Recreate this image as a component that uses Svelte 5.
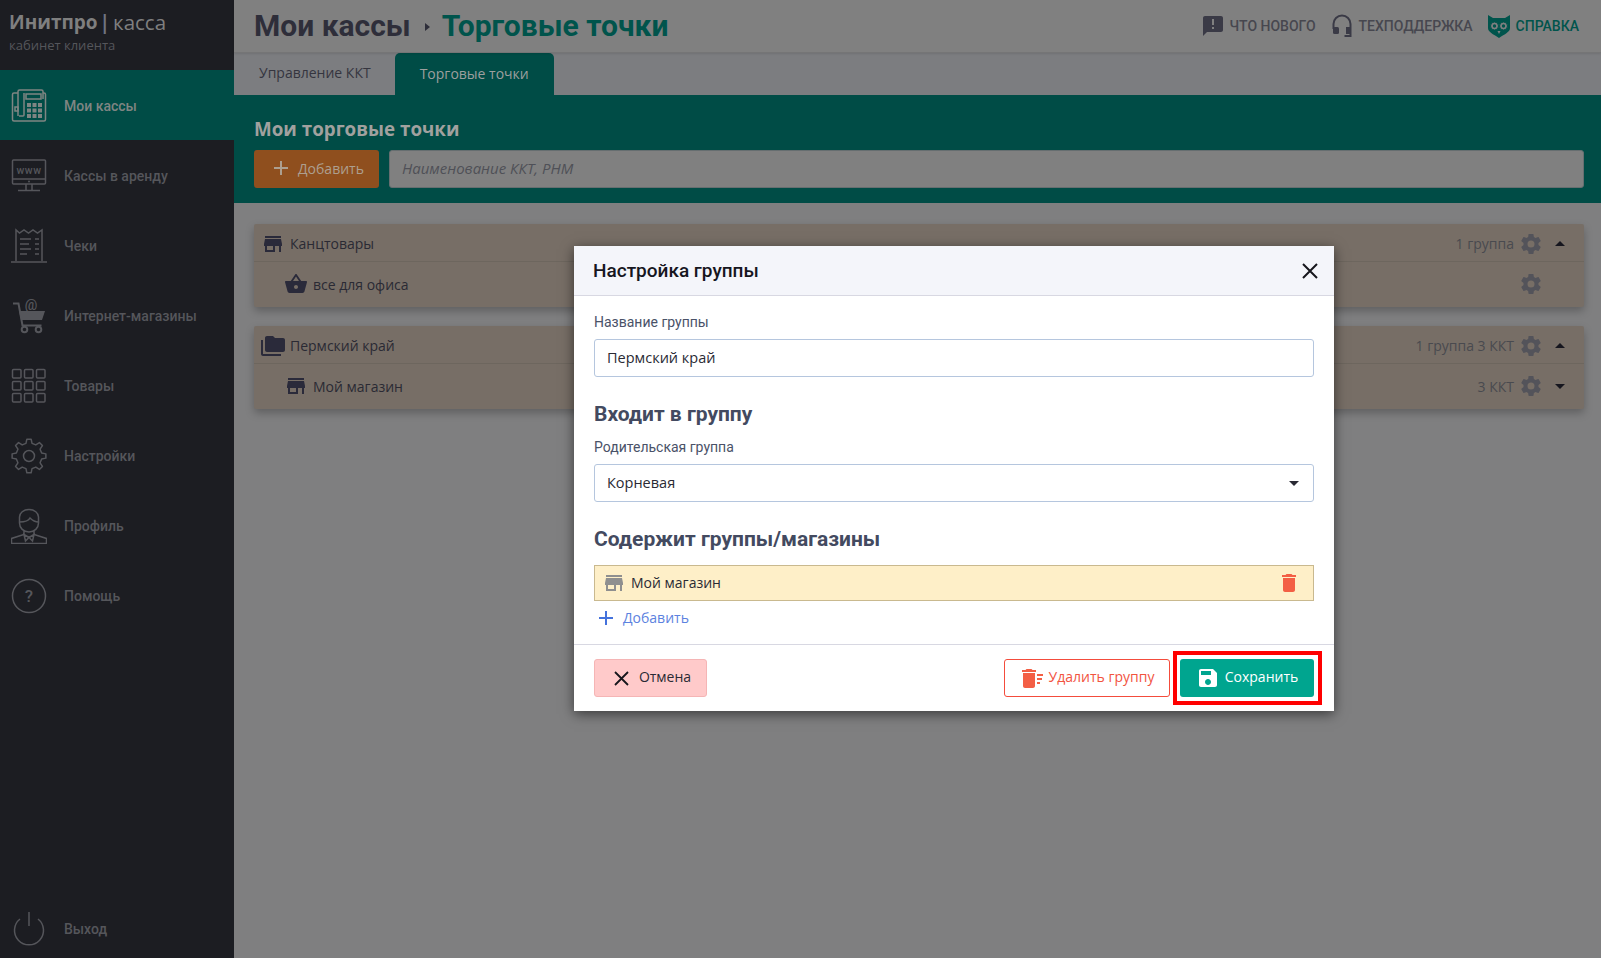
<script lang="ts">
  const icons = {
    store: "M20 4H4v2h16V4zm1 10v-2l-1-5H4l-1 5v2h1v6h10v-6h4v6h2v-6h1zm-9 4H6v-4h6v4z",
    basket: "M17.21 9l-4.38-6.56c-.19-.28-.51-.42-.83-.42-.32 0-.64.14-.83.43L6.79 9H2c-.55 0-1 .45-1 1 0 .09.01.18.04.27l2.54 9.27c.23.84 1 1.46 1.92 1.46h13c.92 0 1.69-.62 1.93-1.46l2.54-9.27L23 10c0-.55-.45-1-1-1h-4.79zM9 9l3-4.4L15 9H9zm3 8c-1.1 0-2-.9-2-2s.9-2 2-2 2 .9 2 2-.9 2-2 2z",
    folders: "M2 6H0v14c0 1.1.9 2 2 2h18v-2H2V6zm20-2h-8l-2-2H6c-1.1 0-2 .9-2 2v12c0 1.1.9 2 2 2h16c1.1 0 2-.9 2-2V6c0-1.1-.9-2-2-2z",
    gear: "M12,15.5A3.5,3.5 0 0,1 8.5,12A3.5,3.5 0 0,1 12,8.5A3.5,3.5 0 0,1 15.5,12A3.5,3.5 0 0,1 12,15.5M19.43,12.97C19.47,12.65 19.5,12.33 19.5,12C19.5,11.67 19.47,11.34 19.43,11L21.54,9.37C21.73,9.22 21.78,8.95 21.66,8.73L19.66,5.27C19.54,5.05 19.27,4.96 19.05,5.05L16.56,6.05C16.04,5.66 15.5,5.32 14.87,5.07L14.5,2.42C14.46,2.18 14.25,2 14,2H10C9.75,2 9.54,2.18 9.5,2.42L9.13,5.07C8.5,5.32 7.96,5.66 7.44,6.05L4.95,5.05C4.73,4.96 4.46,5.05 4.34,5.27L2.34,8.73C2.21,8.95 2.27,9.22 2.46,9.37L4.57,11C4.53,11.34 4.5,11.67 4.5,12C4.5,12.33 4.53,12.65 4.57,12.97L2.46,14.63C2.27,14.78 2.21,15.05 2.34,15.27L4.34,18.73C4.46,18.95 4.73,19.03 4.95,18.95L7.44,17.94C7.96,18.34 8.5,18.68 9.13,18.93L9.5,21.58C9.54,21.82 9.75,22 10,22H14C14.25,22 14.46,21.82 14.5,21.58L14.87,18.93C15.5,18.67 16.04,18.34 16.56,17.94L19.05,18.95C19.27,19.03 19.54,18.95 19.66,18.73L21.66,15.27C21.78,15.05 21.73,14.78 21.54,14.63L19.43,12.97Z",
    save: "M17 3H5c-1.11 0-2 .9-2 2v14c0 1.1.89 2 2 2h14c1.1 0 2-.9 2-2V7l-4-4zm-5 16c-1.66 0-3-1.34-3-3s1.34-3 3-3 3 1.34 3 3-1.34 3-3 3zm3-10H5V5h10v4z",
    trash: "M6 19c0 1.1.9 2 2 2h8c1.1 0 2-.9 2-2V7H6v12zM19 4h-3.5l-1-1h-5l-1 1H5v2h14V4z",
    trashSweep: "M3 20c0 1.1.9 2 2 2h8c1.1 0 2-.9 2-2V7H3v13zM16 4h-3.500l-1-1h-5l-1 1H2v2h14V4zM17 8h6v2h-6zM17 12h5v2h-5zM17 16h3v2h-3z",
    news: "M20 2H4c-1.1 0-1.99.9-1.99 2L2 22l4-4h14c1.1 0 2-.9 2-2V4c0-1.1-.9-2-2-2zm-7 9h-2V5h2v6zm0 4h-2v-2h2v2z"
  };

  const nav = [
    { key: "phone", label: "Мои кассы", active: true },
    { key: "www", label: "Кассы в аренду" },
    { key: "receipt", label: "Чеки" },
    { key: "cart", label: "Интернет-магазины" },
    { key: "grid", label: "Товары" },
    { key: "cog", label: "Настройки" },
    { key: "user", label: "Профиль" },
    { key: "help", label: "Помощь" }
  ];

  const groups = [
    {
      title: "Канцтовары", icon: "store", info: "1 группа", caret: "up",
      child: { title: "все для офиса", icon: "basket", info: "", caret: "" }
    },
    {
      title: "Пермский край", icon: "folders", info: "1 группа 3 ККТ", caret: "up",
      child: { title: "Мой магазин", icon: "store", info: "3 ККТ", caret: "down" }
    }
  ];

  const grid = [0, 12, 24];
  let groupName = $state("Пермский край");

  // outline of the 8-tooth sidebar gear
  function gearPath(cx: number, cy: number, inner: number, outer: number, teeth: number) {
    const pts: string[] = [];
    const step = (Math.PI * 2) / teeth;
    for (let i = 0; i < teeth; i++) {
      const a = i * step - Math.PI / 2;
      const seq: [number, number][] = [
        [inner, a - step * 0.3],
        [outer, a - step * 0.16],
        [outer, a + step * 0.16],
        [inner, a + step * 0.3]
      ];
      for (const [r, t] of seq) {
        pts.push(`${(cx + r * Math.cos(t)).toFixed(2)} ${(cy + r * Math.sin(t)).toFixed(2)}`);
      }
    }
    return "M" + pts.join("L") + "Z";
  }
</script>

{#snippet mi(name, size, cls = "")}
  <svg class={cls} width={size} height={size} viewBox="0 0 24 24" fill="currentColor"><path d={icons[name]} /></svg>
{/snippet}

{#snippet navIcon(key)}
  <svg class="nav-icon" width="36" height="36" viewBox="0 0 36 36" fill="none" stroke="currentColor" stroke-width="1.500">
    {#if key === "phone"}
      <path d="M7 5H3a1.500 1.500 0 0 0-1.500 1.500v25A1.500 1.500 0 0 0 3 33h30a1.500 1.500 0 0 0 1.500-1.500v-25A1.500 1.500 0 0 0 33 5h-1" />
      <path d="M7 28V3.500A1.500 1.500 0 0 1 8.500 2h22A1.500 1.500 0 0 1 32 3.500V11" />
      <path d="M13 5v22a1 1 0 0 1-1 1H8" />
      <rect x="15" y="6" width="15" height="5" />
      <rect x="4" y="19" width="3" height="4" />
      {#each [0, 5.500, 11] as dx}{#each [0, 5.500, 11] as dy}
        <rect x={16 + dx} y={15 + dy} width="4" height="4" fill="currentColor" stroke="none" />
      {/each}{/each}
    {:else if key === "www"}
      <rect x="1.500" y="2" width="33" height="24" rx="1" />
      <path d="M1.500 21h33M15 26v6M21 26v6M7 32.500h22" />
      <circle cx="18" cy="23.500" r="1" fill="currentColor" stroke="none" />
      <text x="18" y="16" text-anchor="middle" font-size="10.500" letter-spacing=".6" fill="currentColor" stroke="none" font-family="Roboto, sans-serif">www</text>
    {:else if key === "receipt"}
      <path d="M5 33V2l3.500 3 4.500-3 4.500 3 4.500-3 4.500 3 4.500-3v31M0 34h37" />
      <path d="M9 11h11M24 11h4M9 16h9M24 16h4M9 21h11M24 21h4M9 26h7M24 26h4" stroke-width="1.600" />
    {:else if key === "cart"}
      <path d="M2 5.500h5.500l4 22h19" stroke-width="2" />
      <path d="M8 13h26l-3 9H10z" fill="currentColor" stroke="none" />
      <circle cx="13.500" cy="31.500" r="2.800" stroke-width="2" />
      <circle cx="27.500" cy="31.500" r="2.800" stroke-width="2" />
      <text x="20" y="12" text-anchor="middle" font-size="14" fill="currentColor" stroke="none" font-family="Roboto, sans-serif">@</text>
    {:else if key === "grid"}
      {#each grid as y}{#each grid as x}
        <rect x={x + 1.500} y={y + 1.500} width="8.500" height="8.500" rx="1" />
      {/each}{/each}
    {:else if key === "cog"}
      <circle cx="18" cy="18" r="5.500" />
      <path d={gearPath(18, 18, 13, 17, 8)} stroke-linejoin="round" />
    {:else if key === "user"}
      <path d="M8.500 15V9c0-4 4-7.500 9.500-7.500S27.500 5 27.500 9v6c0 5-4 9-9.500 9s-9.500-4-9.500-9z" />
      <path d="M8.500 14c5 0 9-1 10.500-4 2 2 4.500 4 8.500 4" />
      <path d="M13 23v3.500L0.500 30.500v5h35v-5L23 26.500V23M13 26.500l5 3-3.500 3.500zM23 26.500l-5 3 3.500 3.500z" />
    {:else if key === "help"}
      <circle cx="18" cy="18" r="16.500" />
      <text x="18" y="24" text-anchor="middle" font-size="17" fill="currentColor" stroke="none" font-family="Roboto, sans-serif">?</text>
    {:else}
      <path d="M18 1v14" />
      <path d="M9 8a14.500 14.500 0 1 0 18 0" />
    {/if}
  </svg>
{/snippet}

<div class="app">
  <aside class="sidebar">
    <div class="logo">
      <div class="logo-name"><b>Инитпро</b> <b class="pipe">|</b> <span>касса</span></div>
      <div class="logo-sub">кабинет клиента</div>
    </div>
    <nav>
      {#each nav as item}
        <a class="nav-item" class:active={item.active} href="#top">
          {@render navIcon(item.key)}
          <span>{item.label}</span>
        </a>
      {/each}
    </nav>
    <a class="nav-item logout" href="#top">
      {@render navIcon("power")}
      <span>Выход</span>
    </a>
  </aside>

  <main class="main">
    <header class="topbar">
      <h1>Мои кассы <i class="crumb"></i> <em>Торговые точки</em></h1>
      <div class="links">
        <a href="#top">{@render mi("news", 24)}ЧТО НОВОГО</a>
        <a href="#top">
          <svg width="24" height="24" viewBox="0 0 24 24" fill="none" stroke="currentColor" stroke-width="2">
            <path d="M3.500 15v-5a8.500 8.500 0 0 1 17 0v12h-6" />
            <rect x="3" y="13" width="6" height="7" rx="1.500" fill="currentColor" stroke="none" />
            <rect x="16" y="13" width="5" height="7" fill="currentColor" stroke="none" />
          </svg>
          ТЕХПОДДЕРЖКА
        </a>
        <a class="help" href="#top">
          <svg width="24" height="24" viewBox="0 0 24 24">
            <path fill="currentColor" d="M1 1l5 3h12l5-3v13c0 4-5 6-11 10C6 20 1 18 1 14z" />
            <circle cx="7.500" cy="12" r="4" fill="#7f7f80" stroke="currentColor" stroke-width="1" />
            <circle cx="16.500" cy="12" r="4" fill="#7f7f80" stroke="currentColor" stroke-width="1" />
            <circle cx="7.500" cy="12" r="1.700" fill="currentColor" />
            <circle cx="16.500" cy="12" r="1.700" fill="currentColor" />
            <path fill="#7f7f80" d="M10.500 17h3L12 20z" />
          </svg>
          СПРАВКА
        </a>
      </div>
    </header>

    <div class="tabs">
      <a class="tab" href="#top">Управление ККТ</a>
      <a class="tab current" href="#top">Торговые точки</a>
    </div>

    <section class="band">
      <h2>Мои торговые точки</h2>
      <div class="band-row">
        <button class="add-btn" type="button"><i class="plus"></i>Добавить</button>
        <input class="search" placeholder="Наименование ККТ, РНМ" />
      </div>
    </section>

    <section class="groups">
      {#each groups as g}
        <div class="card">
          <div class="row">
            <span class="row-icon">{@render mi(g.icon, 24)}</span>
            <span class="row-title">{g.title}</span>
            <span class="row-info">{g.info}</span>
            {@render mi("gear", 24, "gear")}
            <i class="caret {g.caret}"></i>
          </div>
          <div class="row child">
            <span class="row-icon">{@render mi(g.child.icon, 24)}</span>
            <span class="row-title">{g.child.title}</span>
            <span class="row-info">{g.child.info}</span>
            {@render mi("gear", 24, "gear")}
            <i class="caret {g.child.caret}"></i>
          </div>
        </div>
      {/each}
    </section>
  </main>

  <div class="modal">
    <div class="modal-head">
      <h3>Настройка группы</h3>
      <svg width="16" height="16" viewBox="0 0 16 16" stroke="#16161c" stroke-width="2"><path d="M1 1l14 14M15 1L1 15" /></svg>
    </div>
    <div class="modal-body">
      <label class="label" for="group-name">Название группы</label>
      <input id="group-name" class="control" bind:value={groupName} />

      <h4>Входит в группу</h4>
      <label class="label" for="group-parent">Родительская группа</label>
      <div id="group-parent" class="control select"><span>Корневая</span><i class="caret down"></i></div>

      <h4 class="second">Содержит группы/магазины</h4>
      <div class="list-item">
        <span class="list-icon">{@render mi("store", 24)}</span>
        <span class="lift">Мой магазин</span>
        <span class="list-del">{@render mi("trash", 24)}</span>
      </div>
      <a class="list-add" href="#top"><i class="plus"></i><span class="lift">Добавить</span></a>
    </div>
    <div class="modal-foot">
      <button class="btn cancel" type="button">
        <svg width="15" height="15" viewBox="0 0 15 15" stroke="#16161c" stroke-width="1.800"><path d="M1 1l13 13M14 1L1 14" /></svg>
        <span class="lift">Отмена</span>
      </button>
      <button class="btn remove" type="button">{@render mi("trashSweep", 24)}<span class="lift">Удалить группу</span></button>
      <div class="save-mark">
        <button class="btn save" type="button">{@render mi("save", 24)}<span class="lift">Сохранить</span></button>
      </div>
    </div>
  </div>
</div>

<style>
  :global(body) {
    margin: 0;
    background: #7f7f80;
    font-family: "Open Sans", sans-serif;
  }
  .app {
    position: relative;
    display: flex;
    width: 1601px;
    height: 958px;
    overflow: hidden;
  }
  a { text-decoration: none; color: inherit; }
  svg { display: block; flex: none; }
  .lift { display: block; padding-bottom: 2px; }

  .sidebar {
    width: 234px;
    flex: none;
    display: flex;
    flex-direction: column;
    background: #1c1d22;
    color: #55565b;
    font-family: Roboto, sans-serif;
  }
  .logo { height: 70px; box-sizing: border-box; padding: 9px 0 0 9px; font-family: "Open Sans", sans-serif; }
  .logo-name { display: flex; gap: 2px; font-size: 20.500px; line-height: 27px; color: #7f7f7f; }
  .logo-name b { font-weight: 700; font-size: 19px; }
  .logo-name .pipe { color: #6f7480; font-weight: 700; margin-right: 1px; }
  .logo-sub { font-size: 13px; line-height: 18px; color: #55565b; }
  .nav-item {
    height: 70px;
    box-sizing: border-box;
    padding-top: 2px;
    display: flex;
    align-items: center;
    gap: 17px;
    padding-left: 11px;
    font-size: 14px;
    font-weight: 500;
  }
  .nav-item.active { background: #004c46; color: #7f8583; }
  .logout { margin-top: auto; height: 60px; }

  .main { flex: 1; min-width: 0; display: flex; flex-direction: column; }
  .topbar {
    height: 53px;
    box-sizing: border-box;
    flex: none;
    display: flex;
    align-items: center;
    justify-content: space-between;
    padding: 0 22px 0 20px;
    border-bottom: 1px solid #757576;
    background: #808080;
    box-shadow: 0 1px 2px rgba(0, 0, 0, .1);
    position: relative;
  }
  h1 {
    margin: 0;
    display: flex;
    align-items: center;
    font: 700 30px/36px Roboto, sans-serif;
    color: #2e2e3a;
    white-space: nowrap;
  }
  h1 em { font-style: normal; color: #00544c; }
  .crumb {
    width: 0;
    height: 0;
    margin: 2px 12px 0 14px;
    border-left: 5px solid #2e2e3a;
    border-top: 4px solid transparent;
    border-bottom: 4px solid transparent;
  }
  .links { display: flex; align-items: center; gap: 14px; font: 500 14px/24px Roboto, sans-serif; color: #47474f; }
  .links a { display: flex; align-items: center; gap: 5px; }
  .links svg { color: #3a3a46; }
  .links .help, .links .help svg { color: #00544c; }

  .tabs { height: 42px; flex: none; display: flex; align-items: flex-end; background: #7c7d80; }
  .tab {
    height: 42px;
    box-sizing: border-box;
    padding: 0 25px 3px;
    display: flex;
    align-items: center;
    font-size: 14px;
    color: #35353f;
  }
  .tab.current {
    margin-left: -1px;
    background: #004c46;
    border-radius: 5px 5px 0 0;
    color: #9c9f9e;
    padding: 0 25px 1px;
  }

  .band { height: 108px; flex: none; box-sizing: border-box; background: #004c46; padding: 21px 17px 0 20px; }
  h2 { margin: 0 0 7px; font: 700 18.800px/27px "Open Sans", sans-serif; color: #a1a19f; }
  .band-row { display: flex; gap: 10px; }
  .add-btn {
    width: 125px;
    height: 38px;
    flex: none;
    display: flex;
    align-items: center;
    justify-content: center;
    gap: 10px;
    padding: 0 0 2px 5px;
    border: 0;
    border-radius: 3px;
    background: #8f4f1e;
    color: #ad9f8f;
    font: 14px "Open Sans", sans-serif;
  }
  .plus { position: relative; width: 14px; height: 14px; flex: none; }
  .plus::before, .plus::after { content: ""; position: absolute; background: currentColor; }
  .plus::before { left: 0; right: 0; top: 6px; height: 2px; }
  .plus::after { top: 0; bottom: 0; left: 6px; width: 2px; }
  .search {
    flex: 1;
    height: 38px;
    box-sizing: border-box;
    padding: 0 12px 2px;
    border: 1px solid #666e70;
    border-radius: 3px;
    background: #808080;
    font: italic 15px "Open Sans", sans-serif;
  }
  .search::placeholder { color: #4f5057; opacity: 1; }

  .groups { padding: 21px 17px 0 20px; display: flex; flex-direction: column; gap: 19px; }
  .card { background: #776e66; box-shadow: 0 4px 8px rgba(0, 0, 0, .25); border-radius: 2px; }
  .row {
    height: 38px;
    box-sizing: border-box;
    display: flex;
    align-items: center;
    padding: 2px 19px 0 0;
    font-size: 14px;
    color: #2a2a34;
    border-bottom: 1px solid #6d665e;
  }
  .row.child { height: 45px; padding: 0 19px 1px 0; border-bottom: 0; }
  .row-icon { width: 31px; margin-right: 5px; display: flex; justify-content: flex-end; color: #2a2a3a; }
  .row.child .row-icon { width: 54px; margin-right: 5px; }
  .row-title { flex: 1; }
  .row-info { color: #494a4f; margin-right: 5px; }
  .row :global(.gear) { color: #53535a; margin-right: 12px; }
  .caret { width: 0; height: 0; border-left: 5px solid transparent; border-right: 5px solid transparent; flex: none; }
  .caret.up { border-bottom: 5px solid #16161e; }
  .caret.down { border-top: 5px solid #16161e; }
  .row .caret { width: 10px; box-sizing: border-box; }

  .modal {
    position: absolute;
    left: 574px;
    top: 246px;
    width: 760px;
    height: 465px;
    display: flex;
    flex-direction: column;
    background: #fff;
    box-shadow: 0 3px 12px rgba(0, 0, 0, .55);
  }
  .modal-head {
    height: 50px;
    box-sizing: border-box;
    flex: none;
    display: flex;
    align-items: center;
    justify-content: space-between;
    padding: 0 16px 0 19px;
    background: #f4f5fa;
    border-bottom: 1px solid #d8d8e2;
  }
  h3 { margin: 0; font: 500 19px/24px Roboto, sans-serif; color: #16161e; }
  .modal-body { flex: 1; padding: 17px 20px 0; }
  .label { display: block; font: 14px/19px Roboto, sans-serif; color: #4a5268; margin-bottom: 7px; }
  .control {
    display: flex;
    align-items: center;
    justify-content: space-between;
    width: 100%;
    height: 38px;
    box-sizing: border-box;
    padding: 0 12px 2px;
    border: 1px solid #b5c6de;
    border-radius: 3px;
    font: 14.500px "Open Sans", sans-serif;
    color: #2a2a34;
    background: #fff;
    outline: none;
  }
  .select { padding-right: 14px; padding-bottom: 0; }
  .select span { padding-bottom: 2px; }
  .select .caret.down { border-top-color: #2a2a34; }
  h4 { margin: 24px 0 10px; font: 700 21px/27px Roboto, sans-serif; color: #434a60; }
  .second { margin: 24px 0 12px; }
  .list-item {
    height: 36px;
    box-sizing: border-box;
    display: flex;
    align-items: center;
    padding-left: 7px;
    background: #feefc8;
    border: 1px solid #c9b98f;
    font-size: 14px;
    color: #2a2a34;
  }
  .list-icon { color: #8f8f8f; margin-right: 5px; }
  .list-del { margin-left: auto; margin-right: 12px; color: #f35f45; }
  .list-add {
    display: flex;
    align-items: center;
    gap: 10px;
    height: 34px;
    padding-left: 5px;
    font-size: 14px;
    color: #5c82e0;
  }
  .list-add .plus { color: #4472dc; }
  .modal-foot {
    height: 67px;
    flex: none;
    display: flex;
    align-items: center;
    box-sizing: border-box;
    padding: 0 20px;
    border-top: 1px solid #d8d8e2;
  }
  .btn {
    height: 38px;
    box-sizing: border-box;
    display: flex;
    align-items: center;
    justify-content: center;
    border-radius: 3px;
    font: 14px "Open Sans", sans-serif;
    border: 1px solid transparent;
    padding: 0;
  }
  .btn .lift { padding-bottom: 4px; }
  .cancel { width: 113px; gap: 10px; padding-left: 4px; background: #ffcaca; border-color: #f5b5b5; color: #2a2a34; }
  .remove { width: 166px; margin-left: auto; gap: 5px; background: #fff; border-color: #f44c3c; color: #f2543f; }
  .remove :global(svg) { color: #f35f45; }
  .save-mark { margin-left: 3px; padding: 4px 4px 4px 3px; border: 4px solid #ff0000; margin-right: -8px; }
  .save { width: 134px; gap: 5px; background: #00a58f; color: #fff; }
</style>
